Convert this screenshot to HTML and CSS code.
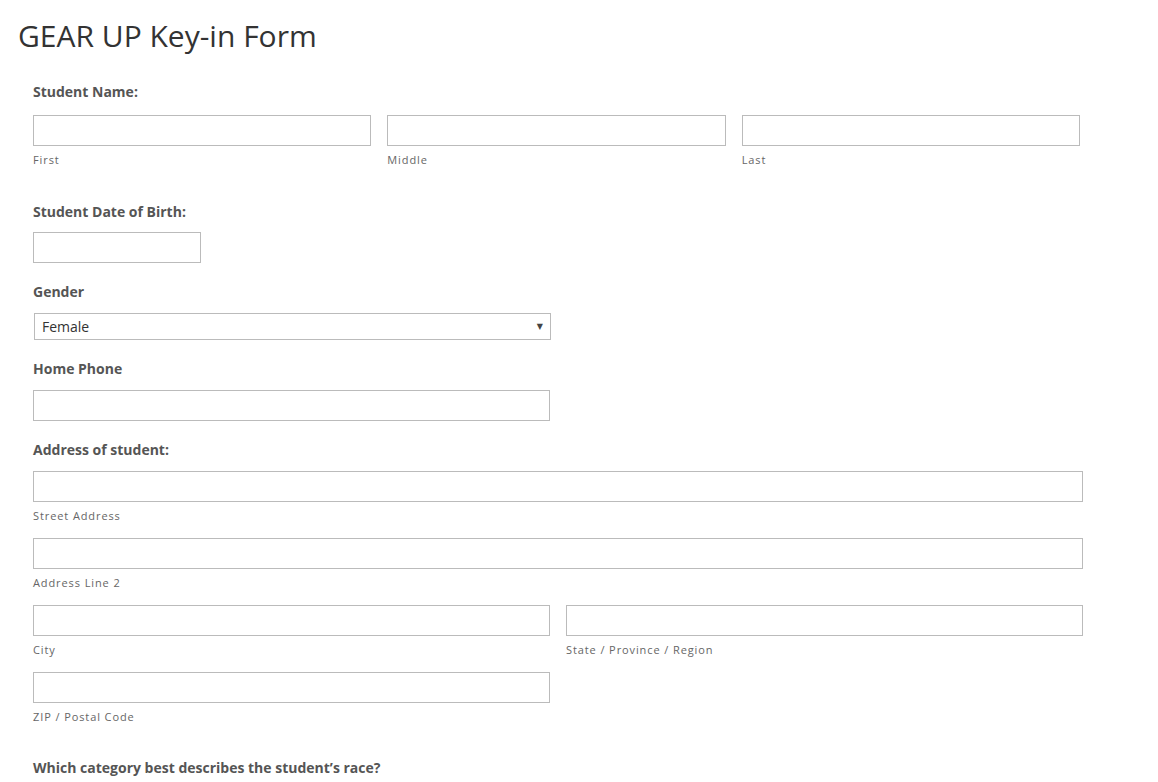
FILE: index.html
```html
<!DOCTYPE html>
<html lang="en">
<head>
<meta charset="utf-8">
<title>GEAR UP Key-in Form</title>
<link rel="stylesheet" href="styles.css">
</head>
<body>
<div class="page">
  <h1 class="title">GEAR UP Key-in Form</h1>
  <form class="form">
    <div class="field complex name-field">
      <div class="label">Student Name:</div>
      <div class="row thirds">
        <div class="sub"><input class="input" type="text"><span class="sublabel">First</span></div>
        <div class="sub"><input class="input" type="text"><span class="sublabel">Middle</span></div>
        <div class="sub"><input class="input" type="text"><span class="sublabel">Last</span></div>
      </div>
    </div>

    <div class="field">
      <div class="label tight">Student Date of Birth:</div>
      <input class="input small" type="text">
    </div>

    <div class="field">
      <div class="label">Gender</div>
      <div class="select">
        <span class="select-value">Female</span>
        <span class="select-arrow">&#9660;</span>
      </div>
    </div>

    <div class="field">
      <div class="label">Home Phone</div>
      <input class="input medium" type="text">
    </div>

    <div class="field complex address">
      <div class="label">Address of student:</div>
      <div class="sub"><input class="input" type="text"><span class="sublabel">Street Address</span></div>
      <div class="sub"><input class="input" type="text"><span class="sublabel">Address Line 2</span></div>
      <div class="row halves">
        <div class="sub"><input class="input" type="text"><span class="sublabel">City</span></div>
        <div class="sub"><input class="input" type="text"><span class="sublabel">State / Province / Region</span></div>
      </div>
      <div class="row halves">
        <div class="sub"><input class="input" type="text"><span class="sublabel">ZIP / Postal Code</span></div>
        <div class="sub"></div>
      </div>
    </div>

    <div class="field">
      <div class="label">Which category best describes the student&rsquo;s race?</div>
    </div>
  </form>
</div>
</body>
</html>
```

FILE: styles.css
```css
* { box-sizing: border-box; }

html, body {
  margin: 0;
  padding: 0;
  background: #fff;
  font-family: "Open Sans", "Noto Sans", sans-serif;
  color: #333;
}

.page {
  padding: 16px 0 0 18px;
}

.title {
  margin: 0;
  font-size: 30px;
  font-weight: 400;
  line-height: 40px;
  color: #333;
}

.form {
  padding: 26px 0 0 15px;
  width: 1065px;
}

.field {
  margin-bottom: 19px;
}

.field.complex {
  margin-bottom: 32px;
}

.field.complex.address {
  margin-bottom: 31px;
}

.label {
  font-size: 14px;
  font-weight: 700;
  line-height: 20px;
  color: #555;
  margin-bottom: 11px;
}

.label.tight {
  margin-bottom: 10px;
}

.name-field .label {
  margin-bottom: 13px;
}

.name-field {
  width: 1047px;
}

.row {
  display: flex;
  gap: 16px;
}

.row > .sub {
  flex: 1 1 0;
  min-width: 0;
}

.sub {
  display: flex;
  flex-direction: column;
  margin-bottom: 12px;
}

.row.thirds .sub,
.address .row:last-child .sub {
  margin-bottom: 0;
}

.input {
  display: block;
  width: 100%;
  height: 31px;
  border: 1px solid #bbb;
  border-radius: 0;
  background: #fff;
  padding: 0 8px;
  font: inherit;
  margin: 0;
}

.input.small { width: 168px; }
.input.medium { width: 517px; }

.sublabel {
  display: block;
  margin-top: 4px;
  font-size: 11px;
  line-height: 20px;
  letter-spacing: 0.9px;
  color: #666;
}

.select {
  display: flex;
  align-items: center;
  justify-content: space-between;
  width: 517px;
  height: 27px;
  margin-left: 1px;
  border: 1px solid #bbb;
  padding: 0 7px 0 7px;
  background: #fff;
}

.select-value {
  font-size: 14px;
  color: #333;
}

.select-arrow {
  font-size: 8px;
  color: #444;
  font-family: "DejaVu Sans", sans-serif;
}
```
